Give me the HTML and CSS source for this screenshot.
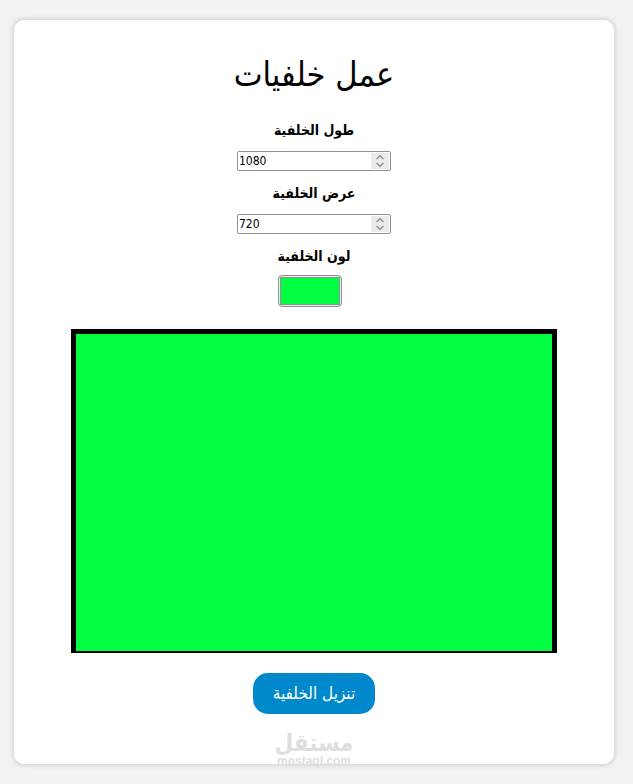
FILE: index.html
```html
<!doctype html>
<html lang="ar" dir="rtl">
<head>
    <meta charset="UTF-8">
    <meta name="viewport" content="width=device-width, initial-scale=1.0">
    <title>عمل خلفيات</title>
    <link rel="stylesheet" href="styles.css">
</head>
<body>
<main class="container">
    <h1>عمل خلفيات</h1>
    <label for="height">طول الخلفية</label>
    <div class="number">
        <input type="number" id="height" value="1080" dir="ltr">
        <span class="spinner">
            <svg viewBox="0 0 18 16"><path d="M5.5 6 9 2.8 12.5 6M5.5 10 9 13.2l3.5-3.2"/></svg>
        </span>
    </div>
    <label for="width">عرض الخلفية</label>
    <div class="number">
        <input type="number" id="width" value="720" dir="ltr">
        <span class="spinner">
            <svg viewBox="0 0 18 16"><path d="M5.5 6 9 2.8 12.5 6M5.5 10 9 13.2l3.5-3.2"/></svg>
        </span>
    </div>
    <label for="color">لون الخلفية</label>
    <input type="color" id="color" class="color" value="#00ff40">
    <canvas id="canvas" width="1080" height="720"></canvas>
    <button type="button" id="download">تنزيل الخلفية</button>
    <div class="watermark">
        <span class="watermark-name">مستقل</span>
        <span class="watermark-site">mostaql.com</span>
    </div>
</main>
<script src="script.js"></script>
</body>
</html>
```
FILE: styles.css
```css
* {
    box-sizing: border-box;
}

body {
    margin: 0;
    padding: 20px 19px 20px 14px;
    background-color: #f2f2f2;
    font-family: "DejaVu Sans Condensed", "DejaVu Sans", sans-serif;
    color: #000;
}

.container {
    position: relative;
    display: flex;
    flex-direction: column;
    align-items: center;
    max-width: 600px;
    margin: 0 auto;
    padding: 30px 30px 50px;
    background-color: #fff;
    border-radius: 10px;
    box-shadow: 0 0 5px 1px rgba(0, 0, 0, 0.15);
}

h1 {
    margin: 0 0 22px;
    font-size: 34px;
    font-weight: normal;
    line-height: 48px;
}

label {
    font-size: 14px;
    font-weight: bold;
    line-height: 20px;
}

.number {
    position: relative;
    width: 154px;
    height: 20px;
    margin: 11px 0 12px;
}

.number input {
    display: block;
    width: 100%;
    height: 100%;
    padding: 1px;
    border: 1px solid #8f8f9d;
    border-radius: 2px;
    background-color: #fff;
    font-family: inherit;
    font-size: 12px;
    color: #000;
    appearance: textfield;
}

.number input::-webkit-inner-spin-button {
    appearance: none;
    margin: 0;
}

.spinner {
    position: absolute;
    top: 2px;
    right: 2px;
    width: 18px;
    height: 16px;
    background-color: #ebebeb;
    pointer-events: none;
}

.spinner svg {
    display: block;
    fill: none;
    stroke: #8f8f9d;
    stroke-width: 1.5;
}

.color {
    width: 64px;
    height: 32px;
    margin: 9px 8px 22px 0;
    padding: 1px;
    border: 1px solid #8f8f9d;
    border-radius: 4px;
    background-color: #ebebeb;
}

.color::-webkit-color-swatch-wrapper {
    padding: 0;
}

.color::-webkit-color-swatch {
    border: 1px solid #8f8f9d;
    border-radius: 0;
}

canvas {
    display: block;
    width: 90%;
    border: 5px solid #000;
    border-bottom-width: 2px;
}

button {
    margin-top: 20px;
    padding: 10px 20px;
    border: none;
    border-radius: 15px;
    background-color: #0088cc;
    color: #fff;
    font-family: inherit;
    font-size: 17px;
    line-height: 21px;
    cursor: pointer;
}

.watermark {
    position: absolute;
    bottom: -4px;
    left: 0;
    right: 0;
    text-align: center;
    color: #dedede;
    pointer-events: none;
}

.watermark span {
    display: block;
}

.watermark-name {
    font-size: 24px;
    font-weight: bold;
    line-height: 22px;
}

.watermark-site {
    font-family: "Liberation Sans", sans-serif;
    font-size: 12px;
    font-weight: bold;
    line-height: 14px;
}
```
FILE: script.js
```js
const canvas = document.getElementById('canvas'),
    heightInput = document.getElementById('height'),
    widthInput = document.getElementById('width'),
    colorInput = document.getElementById('color'),
    downloadBtn = document.getElementById('download');

const draw = () => {
    canvas.width = heightInput.value;
    canvas.height = widthInput.value;
    const ctx = canvas.getContext('2d');
    ctx.fillStyle = colorInput.value;
    ctx.fillRect(0, 0, canvas.width, canvas.height);
}

heightInput.addEventListener('input', draw);
widthInput.addEventListener('input', draw);
colorInput.addEventListener('input', draw);

downloadBtn.addEventListener('click', () => {
    const link = document.createElement('a');
    link.download = 'background.png';
    link.href = canvas.toDataURL();
    link.click();
});

draw();
```
